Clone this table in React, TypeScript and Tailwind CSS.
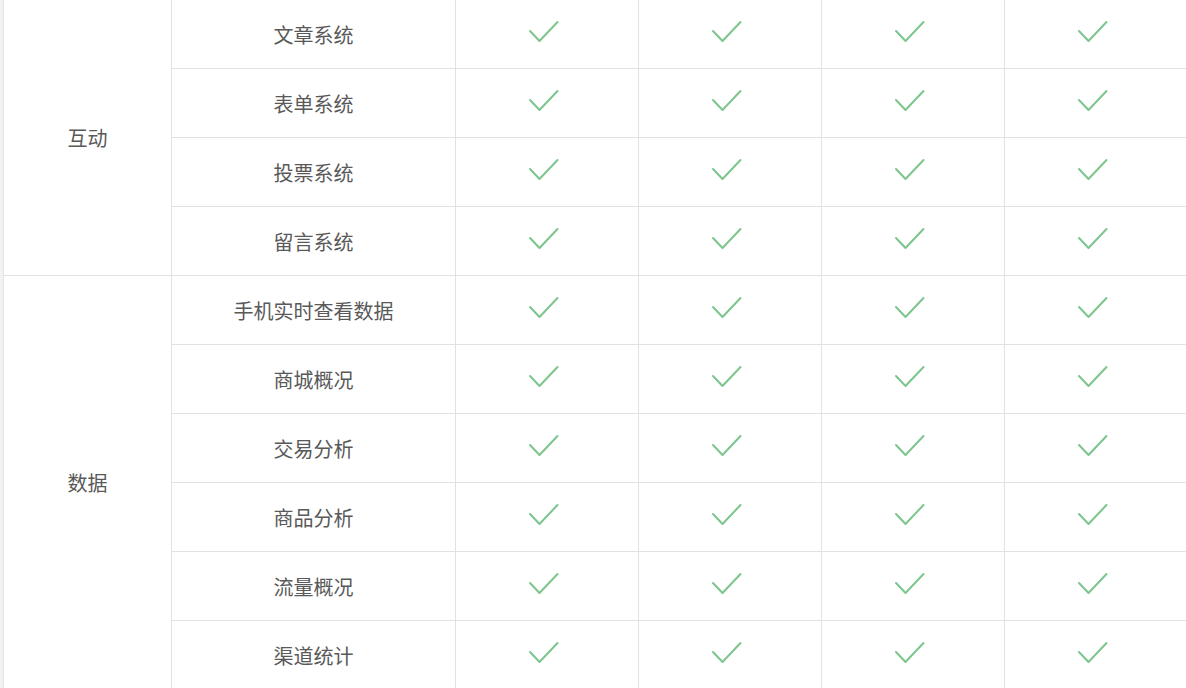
import { Fragment } from "react";

const groups = [
  { name: "互动", items: ["文章系统", "表单系统", "投票系统", "留言系统"] },
  { name: "数据", items: ["手机实时查看数据", "商城概况", "交易分析", "商品分析", "流量概况", "渠道统计"] },
];

const Check = () => (
  <svg width="31" height="23" viewBox="0 0 31 23" fill="none">
    <polyline points="2,11 11.5,21 29.5,2" stroke="#7cc58d" strokeWidth="2" strokeLinecap="round" strokeLinejoin="round" />
  </svg>
);

const cell = "h-[69px] border-b border-r border-[#e2e2e2] flex items-center justify-center";

export default function App() {
  return (
    <div className="w-[1186px] h-[688px] overflow-hidden bg-white flex">
      <div className="w-[3px] shrink-0 bg-[#f2f2f4]" />
      <div
        className="grid grid-cols-[168px_284px_183px_183px_183px_183px] border-l border-[#e2e2e2] shrink-0 text-[20px] text-[#595959]"
        style={{ fontFamily: '"Noto Sans CJK SC", "Noto Sans", sans-serif' }}
      >
        {groups.map(g => (
          <Fragment key={g.name}>
            <div
              className={`border-b border-r border-[#e2e2e2] flex items-center justify-center pt-[1px] ${g.items.length === 4 ? "row-span-4" : "row-span-6"}`}
            >
              {g.name}
            </div>
            {g.items.map(item => (
              <Fragment key={item}>
                <div className={`${cell} col-start-2 pt-[2px]`}>
                  <span className="leading-none">{item}</span>
                </div>
                {[0, 1, 2, 3].map(k => (
                  <div key={k} className={`${cell} pr-[7px] pb-[5px]`}>
                    <Check />
                  </div>
                ))}
              </Fragment>
            ))}
          </Fragment>
        ))}
      </div>
    </div>
  );
}
